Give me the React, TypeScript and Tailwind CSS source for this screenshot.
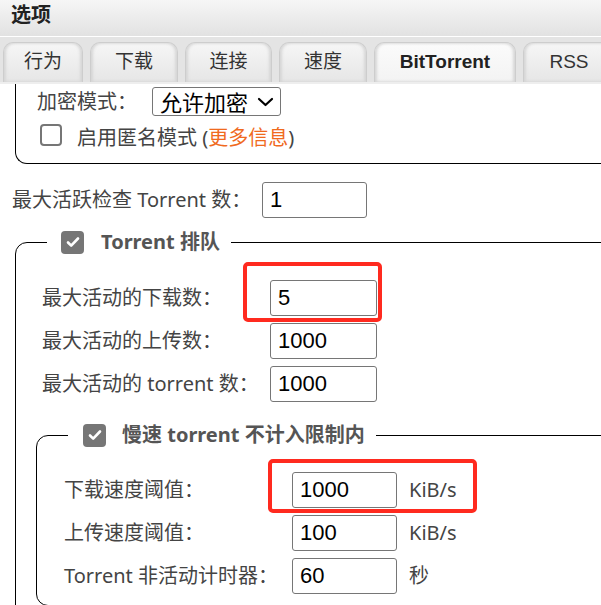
import React from "react";

const labelFont = "font-['Noto_Sans','Noto_Sans_CJK_SC',sans-serif]";
const arialFont = "font-['Liberation_Sans','Noto_Sans_CJK_SC',sans-serif]";

const tabs = [
  { name: "行为", w: "w-[80px]" },
  { name: "下载", w: "w-[88px]" },
  { name: "连接", w: "w-[87px]" },
  { name: "速度", w: "w-[88px]" },
  { name: "BitTorrent", w: "w-[142px]", active: true },
  { name: "RSS", w: "w-[92px]" },
];

function Checked() {
  return (
    <span className="flex h-[23px] w-[23px] items-center justify-center rounded-[4px] bg-[#767676]">
      <svg width="16" height="16" viewBox="0 0 16 16" aria-hidden>
        <path d="M3 8.5l3.2 3.2L13 4.5" fill="none" stroke="#fff" strokeWidth="2.6" strokeLinecap="round" strokeLinejoin="round" />
      </svg>
    </span>
  );
}

function NumInput({ value, w = "w-[107px]" }: { value: string; w?: string }) {
  return (
    <div
      className={`flex h-[36px] ${w} items-center rounded-[3px] border border-[#767676] bg-white px-[7px] text-[22px] leading-none text-black ${arialFont}`}
    >
      {value}
    </div>
  );
}

function Row({
  label,
  value,
  labelW,
  inputW,
  unit,
  mark,
}: {
  label: string;
  value: string;
  labelW: string;
  inputW?: string;
  unit?: string;
  mark?: React.ReactNode;
}) {
  return (
    <div className="flex items-center">
      <span className={`${labelW} text-[20px] leading-none text-[#444]`}>{label}</span>
      <div className="relative flex items-center">
        <NumInput value={value} w={inputW} />
        {unit && <span className="ml-[12px] text-[20px] leading-none text-[#444]">{unit}</span>}
        {mark}
      </div>
    </div>
  );
}

export default function App() {
  return (
    <div className={`h-[605px] w-[601px] overflow-hidden bg-white ${labelFont}`}>
      {/* title */}
      <div className="flex h-[37px] items-center border-b border-white bg-gradient-to-b from-[#f6f6f6] to-[#e2e2e2] px-[11px] pb-[6px]">
        <span className="text-[20px] font-bold leading-none text-[#222]">选项</span>
      </div>

      {/* tabs */}
      <div className="flex h-[47px] items-end gap-[7px] overflow-hidden border-b-2 border-[#eeeeee] bg-[#e4e4e4] pl-[3px]">
        {tabs.map((t) => (
          <div
            key={t.name}
            className={`flex h-[40px] shrink-0 ${t.w} items-center justify-center rounded-t-[10px] border border-b-0 border-[#cdcdcd] pb-[2px] shadow-[inset_2px_0_3px_#d6d6d6,inset_-2px_0_3px_#d6d6d6] ${
              t.active
                ? "bg-gradient-to-b from-[#fbfbfb] to-[#f3f3f3] font-bold text-[#222]"
                : "bg-gradient-to-b from-[#f6f6f6] to-[#e6e6e6] text-[#333]"
            } text-[19px] leading-none ${arialFont}`}
          >
            {t.name}
          </div>
        ))}
      </div>

      {/* content */}
      <div className="w-[640px] pl-[12px]">
        {/* encryption fieldset (top scrolled out of view) */}
        <div className="ml-[3px] rounded-bl-[12px] border-b border-l border-black pb-[15px] pl-[21px] pt-[3px]">
          <div className="flex items-center">
            <span className="w-[115px] text-[20px] leading-none text-[#444]">加密模式：</span>
            <div className="flex h-[29px] w-[129px] items-center justify-between rounded-[3px] border border-[#767676] bg-white pl-[7px] pr-[6px] text-[22px] leading-none text-black">
              <span>允许加密</span>
              <svg width="17" height="10" viewBox="0 0 17 10" aria-hidden>
                <path d="M2 2l6.5 6L15 2" fill="none" stroke="#000" strokeWidth="2.2" strokeLinecap="round" strokeLinejoin="round" />
              </svg>
            </div>
          </div>
          <div className="mt-[6px] flex items-center">
            <span className="ml-[3px] h-[22px] w-[22px] rounded-[4px] border-2 border-[#767676] bg-white" />
            <span className="ml-[15px] mt-[6px] text-[20px] leading-none text-[#444]">
              启用匿名模式 (<span className="text-[#f06a1e]">更多信息</span>)
            </span>
          </div>
        </div>

        <div className="mt-[18px] flex items-center">
          <span className="w-[250px] text-[20px] leading-none text-[#444]">最大活跃检查 Torrent 数：</span>
          <NumInput value="1" w="w-[105px]" />
        </div>

        {/* torrent queueing */}
        <fieldset className="ml-[3px] mt-[11px] rounded-[12px] border border-black pb-[40px] pl-[26px]">
          <legend className="ml-[5px] flex h-[26px] items-center gap-[17px] pl-[14px] pr-[11px]">
            <Checked />
            <span className="text-[20px] font-bold leading-none text-[#555]">Torrent 排队</span>
          </legend>
          <div className="flex flex-col gap-[7px] pt-[25px]">
            <Row
              label="最大活动的下载数："
              value="5"
              labelW="w-[228px]"
              mark={
                <span className="absolute -left-[27px] -top-[18px] h-[60px] w-[139px] rounded-[5px] border-4 border-[#ff2a1f]" />
              }
            />
            <Row label="最大活动的上传数：" value="1000" labelW="w-[228px]" />
            <Row label="最大活动的 torrent 数：" value="1000" labelW="w-[228px]" />
          </div>

          {/* slow torrents */}
          <fieldset className="-ml-[6px] mt-[20px] rounded-[12px] border border-black pb-[11px] pl-[27px]">
            <legend className="ml-[4px] flex h-[26px] items-center gap-[16px] pl-[15px] pr-[11px]">
              <Checked />
              <span className="text-[20px] font-bold leading-none text-[#555]">慢速 torrent 不计入限制内</span>
            </legend>
            <div className="flex flex-col gap-[7px] pt-[24px]">
              <Row
                label="下载速度阈值："
                value="1000"
                unit="KiB/s"
                labelW="w-[228px]"
                inputW="w-[105px]"
                mark={
                  <span className="absolute -left-[24px] -top-[13px] h-[54px] w-[209px] rounded-[5px] border-4 border-[#ff2a1f]" />
                }
              />
              <Row label="上传速度阈值：" value="100" unit="KiB/s" labelW="w-[228px]" inputW="w-[105px]" />
              <Row label="Torrent 非活动计时器：" value="60" unit="秒" labelW="w-[228px]" inputW="w-[105px]" />
            </div>
          </fieldset>
        </fieldset>
      </div>
    </div>
  );
}
